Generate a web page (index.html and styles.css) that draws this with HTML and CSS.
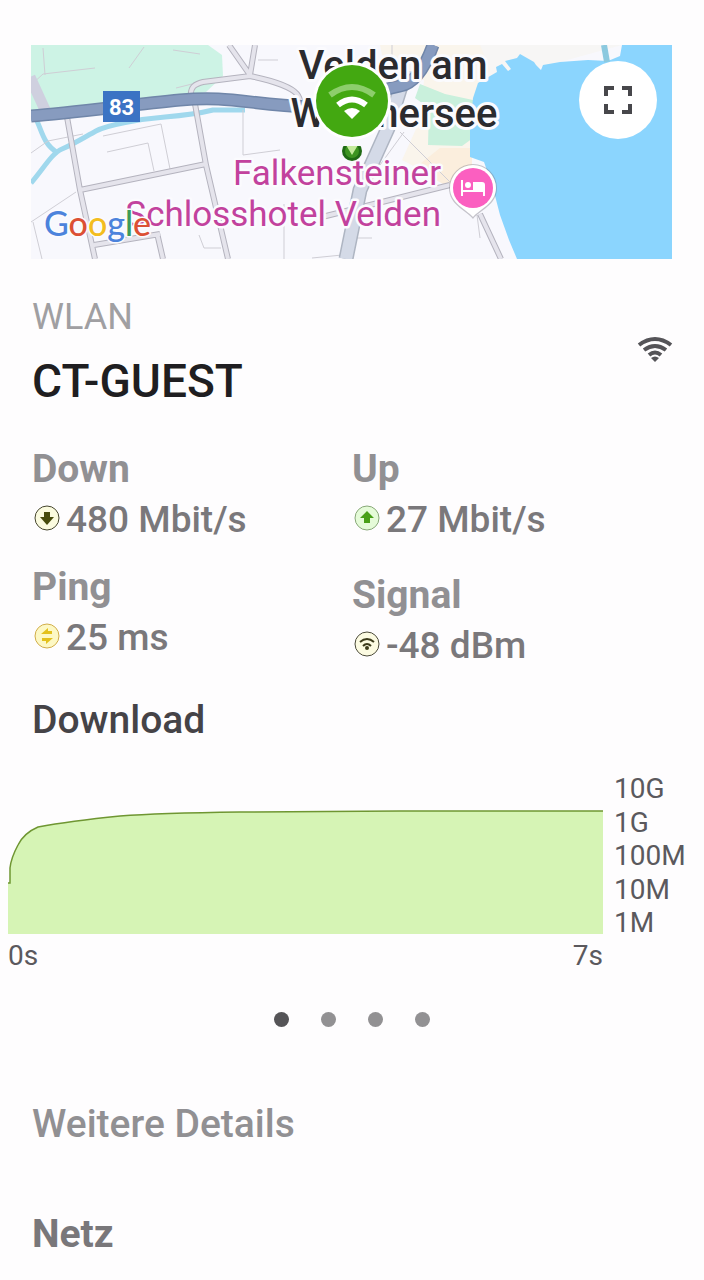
FILE: index.html
```html
<!DOCTYPE html>
<html lang="de">
<head>
  <meta charset="UTF-8">
  <meta name="viewport" content="width=device-width, initial-scale=1.0">
  <title>CT-GUEST</title>
  <link rel="stylesheet" href="styles.css">
</head>
<body>
  <main>
    <section class="map">
      <svg class="map-canvas" viewBox="31 45 641 214">
        <rect x="31" y="45" width="641" height="214" fill="#f8f8fd"/>
        <!-- parks and beach -->
        <path d="M31 45H208L222 55 223 76 206 92 186 96 100 106 31 114Z" fill="#cdf3e5"/>
        <path d="M480 45H622L560 62 478 84Z" fill="#f7f6f5"/>
        <path d="M380 45H480L490 70 478 84 470 157 452 190 436 178 402 160 420 120 424 80 385 70Z" fill="#faf5ec"/>
        <path d="M440 148H472V176L450 188 415 168Z" fill="#fbeedd"/>
        <path d="M420 84 445 94 473 100V138L462 146 428 145 429 108 415 98Z" fill="#c9f0dc"/>
        <path d="M453 188 490 176 512 259H449Z" fill="#f8f8fd"/>
        <!-- lake -->
        <path d="M672 45H622L620 56 608 61 588 60 560 62 543 65 541 70 536 65 534 62 520 54 517 58 505 61 511 69 508 71 502 64 496 67 497 72 478 83 473 98 470 130V157L484 162 493 188 500 215 509 240 517 259H672Z" fill="#8bd5fe"/>
        <path d="M604 45 607 62" fill="none" stroke="#8cc9df" stroke-width="6"/>
        <!-- river -->
        <g fill="none" stroke="#a0d8ed" stroke-width="5">
          <path d="M31 183C44 168 52 153 62 149S85 137 96 131 140 119 165 117 205 112 213 110L245 110"/>
          <path d="M37 121C42 132 44 145 58 153"/>
        </g>
        <!-- footpaths -->
        <g fill="none" stroke="#cfced5" stroke-width="1">
          <path d="M43 48 45 75M31 85 43 74 95 68M129 68 144 47M173 50 200 54M103 136 161 124 170 169M107 152 148 143 154 171M31 153 48 141 83 134M31 222 76 192M33 222 42 259M199 235 204 248H221M243 110V155L280 150M258 60H278M284 204V259M312 258 342 255M355 238H372M400 132 450 182M404 132 380 165M477 215 480 238M392 45V60M176 88 192 84"/>
        </g>
        <!-- side streets -->
        <g fill="none" stroke="#b4b3be" stroke-width="6">
          <path d="M67 117 80 190 95 259M195 104 206 165 228 259M80 190 206 164M94 245 160 234M157 233 163 259M229 45 250 75M255 45 250 75M191 96C190 87 195 84 203 82L250 76C275 81 292 88 297 94S300 105 305 120M480 214 501 259M322 217 450 185"/>
        </g>
        <g fill="none" stroke="#e5e4ec" stroke-width="4">
          <path d="M67 117 80 190 95 259M195 104 206 165 228 259M80 190 206 164M94 245 160 234M157 233 163 259M229 45 250 75M255 45 250 75M191 96C190 87 195 84 203 82L250 76C275 81 292 88 297 94S300 105 305 120M480 214 501 259M322 217 450 185"/>
        </g>
        <path d="M30 77 46 112" stroke="#cfd0df" stroke-width="11"/>
        <path d="M406 70 388 128 360 190 346 259" fill="none" stroke="#aeb5c2" stroke-width="15"/>
        <path d="M406 70 388 128 360 190 346 259" fill="none" stroke="#d4dae7" stroke-width="12"/>
        <!-- main road -->
        <path d="M31 116C70 113 130 105 180 100S250 105 310 107L400 86Q420 82 433 45" fill="none" stroke="#7086a9" stroke-width="13"/>
        <path d="M31 116C70 113 130 105 180 100S250 105 310 107L400 86Q420 82 433 45" fill="none" stroke="#879bbf" stroke-width="10"/>
        <rect x="103" y="91" width="37" height="31" fill="#3b73c4"/>
        <text class="road" x="109" y="115">83</text>

        <text class="town" x="393" y="79">Velden am</text>
        <text class="town" x="394" y="127">Wörthersee</text>
        <text class="hotel" x="441" y="185">Falkensteiner</text>
        <text class="hotel" x="441" y="226">Schlosshotel Velden</text>

        <!-- hotel pin -->
        <path d="M473 219C466 210 449 205 449 188A24 24 0 0 1 497 188C497 205 480 210 473 219Z" fill="#77758066"/>
        <path d="M473 217C466 209 450 203 450 188A23 23 0 0 1 496 188C496 203 480 209 473 217Z" fill="#fff"/>
        <circle cx="473" cy="188" r="20" fill="#fb5fc0"/>
        <path d="M461 180H463V190H473V182H482Q485 182 485 185V196H483V192H463V196H461Z" fill="#fff"/>
        <circle cx="468" cy="185" r="3" fill="#fff"/>

        <!-- network marker -->
        <circle cx="352" cy="151" r="10" fill="#1f6a14"/>
        <circle cx="352" cy="151" r="7" fill="#3c9420"/>
        <path d="M346 145 352 155 358 145Z" fill="#c4ea9c"/>
        <path d="M340 136H364V146H340Z" fill="#f8f8fd"/>
        <circle cx="352" cy="101" r="39" fill="#fff"/>
        <circle cx="352" cy="101" r="36" fill="#43a811"/>
        <path d="M330 95Q352 79 374 95" fill="none" stroke="#8dce6c" stroke-width="6"/>
        <path d="M338 105Q352 94 366 105" fill="none" stroke="#fff" stroke-width="6"/>
        <path d="M352 119 344 111Q352 105 360 111Z" fill="#fff"/>

        <text class="google" x="44" y="236"><tspan class="g-blue">G</tspan><tspan class="g-red">o</tspan><tspan class="g-yellow">o</tspan><tspan class="g-blue">g</tspan><tspan class="g-green">l</tspan><tspan class="g-red">e</tspan></text>
      </svg>
      <button type="button" class="fullscreen" aria-label="Vollbild">
        <svg width="28" height="28" viewBox="0 0 28 28" fill="none" stroke="#47474b" stroke-width="4">
          <path d="M2 10V2H10M18 2H26V10M26 18V26H18M10 26H2V18"/>
        </svg>
      </button>
    </section>

    <header class="network">
      <div>
        <p class="type">WLAN</p>
        <h1>CT-GUEST</h1>
      </div>
      <svg class="wifi" width="36" height="26" viewBox="0 0 36 26" fill="none" stroke="#555458" stroke-width="4">
        <path d="M2 9Q18-3 34 9M7 14Q18 6 29 14M12 19Q18 14 24 19"/>
        <path d="M18 26 14 22Q18 19 22 22Z" fill="#555458" stroke="none"/>
      </svg>
    </header>

    <section class="stats">
      <dl class="stats-left">
        <div>
          <dt>Down</dt>
          <dd>
            <svg class="badge" viewBox="0 0 26 26">
              <circle cx="13" cy="13" r="12" fill="#fbfbdf" stroke="#45452e"/>
              <path d="M10 7H16V12H20L13 20 6 12H10Z" fill="#474b0c"/>
            </svg>
            480 Mbit/s
          </dd>
        </div>
        <div>
          <dt>Ping</dt>
          <dd>
            <svg class="badge" viewBox="0 0 26 26">
              <circle cx="13" cy="13" r="12" fill="#fdf8c4" stroke="#d1ad49"/>
              <path d="M7 11 14 5V8H18V11ZM19 15 12 21V18H8V15Z" fill="#e3c11d"/>
            </svg>
            25 ms
          </dd>
        </div>
      </dl>
      <dl class="stats-right">
        <div>
          <dt>Up</dt>
          <dd>
            <svg class="badge" viewBox="0 0 26 26">
              <circle cx="13" cy="13" r="12" fill="#e5fbd8" stroke="#88a878"/>
              <path d="M10 18H16V13H20L13 6 6 13H10Z" fill="#49a018"/>
            </svg>
            27 Mbit/s
          </dd>
        </div>
        <div>
          <dt>Signal</dt>
          <dd>
            <svg class="badge" viewBox="0 0 26 26">
              <circle cx="13" cy="13" r="12" fill="#fcfbe2" stroke="#4b4a3a"/>
              <path d="M6 11Q13 5 20 11M9 15Q13 11 17 15" fill="none" stroke="#3c3b1c" stroke-width="2"/>
              <circle cx="13" cy="17" r="2" fill="#3c3b1c"/>
            </svg>
            -48 dBm
          </dd>
        </div>
      </dl>
    </section>

    <h2 class="chart-title">Download</h2>
    <section class="chart">
      <svg class="plot" viewBox="0 0 595 167" preserveAspectRatio="none">
        <path d="M0 111H2V96Q3 86 10 73 16 61 30 55 62 49 112 44 150 41 232 40L392 39H595V162H0Z" fill="#d6f4b5"/>
        <path d="M0 111H2V96Q3 86 10 73 16 61 30 55 62 49 112 44 150 41 232 40L392 39H595" fill="none" stroke="#6f9632" stroke-width="1.5"/>
      </svg>
      <div class="y-axis">
        <span>10G</span>
        <span>1G</span>
        <span>100M</span>
        <span>10M</span>
        <span>1M</span>
      </div>
      <div class="x-axis">
        <span>0s</span>
        <span>7s</span>
      </div>
    </section>

    <nav class="pager">
      <button type="button" class="dot active" aria-label="Seite 1"></button>
      <button type="button" class="dot" aria-label="Seite 2"></button>
      <button type="button" class="dot" aria-label="Seite 3"></button>
      <button type="button" class="dot" aria-label="Seite 4"></button>
    </nav>

    <h2 class="details">Weitere Details</h2>
    <h3 class="group">Netz</h3>
  </main>
</body>
</html>
```
FILE: styles.css
```css
* {
    box-sizing: border-box;
}
body {
    margin: 0;
    background: #fefdfe;
    color: #1f1e21;
    font-family: Roboto, "Liberation Sans", sans-serif;
}
h1, h2, h3, p, dl, dd {
    margin: 0;
}
main {
    padding: 45px 0 16px;
}

/* map */
.map {
    position: relative;
    margin: 0 32px 0 31px;
}
.map-canvas {
    display: block;
    width: 100%;
}
.road {
    font-size: 22px;
    font-weight: 700;
    fill: #fff;
}
.town, .hotel, .google {
    stroke: #fbfbfe;
    paint-order: stroke;
    stroke-linejoin: round;
}
.town {
    font-size: 40px;
    font-weight: 500;
    text-anchor: middle;
    fill: #2b2b2f;
    stroke-width: 6px;
}
.hotel {
    font-size: 35px;
    text-anchor: end;
    fill: #c2429d;
    stroke-width: 5px;
}
.google {
    font-family: Lato, sans-serif;
    font-size: 34px;
    font-weight: 500;
    stroke-width: 3px;
}
.g-blue {
    fill: #4c83dc;
}
.g-red {
    fill: #dc5035;
}
.g-yellow {
    fill: #f3bd20;
}
.g-green {
    fill: #3d9b58;
}
.fullscreen {
    position: absolute;
    top: 16px;
    right: 15px;
    display: flex;
    align-items: center;
    justify-content: center;
    width: 78px;
    height: 78px;
    padding: 0;
    border: none;
    border-radius: 50%;
    background: #fff;
}

/* network name */
.network {
    display: flex;
    align-items: center;
    justify-content: space-between;
    padding: 36px 31px 0 32px;
}
.wifi {
    margin-bottom: 6px;
}
.type {
    margin-bottom: 14px;
    font-size: 36px;
    line-height: 44px;
    color: #a09fa2;
}
h1 {
    font-size: 46px;
    font-weight: 500;
    line-height: 56px;
}

/* measured values */
.stats {
    display: grid;
    grid-template-columns: 1fr 1fr;
    padding: 36px 32px 0;
}
.stats-left, .stats-right {
    display: flex;
    flex-direction: column;
    gap: 19px;
}
.stats-right {
    gap: 27px;
}
dt {
    margin-bottom: 3px;
    font-size: 39px;
    font-weight: 700;
    line-height: 48px;
    color: #919093;
}
dd {
    display: flex;
    align-items: center;
    gap: 6px;
    font-size: 37px;
    font-weight: 500;
    line-height: 48px;
    color: #7a787b;
}
.badge {
    width: 26px;
    height: 26px;
    margin: 0 0 4px 2px;
}

/* chart */
.chart-title {
    padding: 26px 32px 28px;
    font-size: 39px;
    font-weight: 500;
    line-height: 48px;
    color: #454347;
}
.chart {
    display: grid;
    grid-template-columns: 1fr 82px;
    column-gap: 11px;
    padding: 0 8px;
    font-size: 28px;
    line-height: 33px;
    color: #5b595d;
}
.plot {
    display: block;
    width: 100%;
    height: 167px;
}
.y-axis {
    display: flex;
    flex-direction: column;
    justify-content: space-between;
}
.x-axis {
    display: flex;
    justify-content: space-between;
}

/* page dots */
.pager {
    display: flex;
    justify-content: center;
    gap: 32px;
    padding: 40px 0 73px;
}
.dot {
    width: 15px;
    height: 15px;
    padding: 0;
    border: none;
    border-radius: 50%;
    background: #929193;
}
.dot.active {
    background: #555457;
}

.details {
    padding: 0 32px;
    font-size: 39px;
    font-weight: 500;
    line-height: 48px;
    color: #919093;
}
.group {
    padding: 62px 32px 0;
    font-size: 39px;
    font-weight: 700;
    line-height: 48px;
    color: #79777a;
}
```
